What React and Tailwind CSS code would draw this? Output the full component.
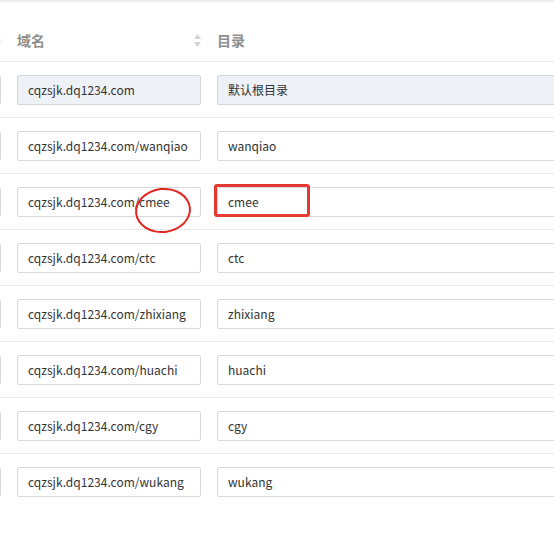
import React from 'react';

const rows = [
  { domain: 'cqzsjk.dq1234.com', dir: '默认根目录', disabled: true },
  { domain: 'cqzsjk.dq1234.com/wanqiao', dir: 'wanqiao' },
  { domain: 'cqzsjk.dq1234.com/cmee', dir: 'cmee', marked: true },
  { domain: 'cqzsjk.dq1234.com/ctc', dir: 'ctc' },
  { domain: 'cqzsjk.dq1234.com/zhixiang', dir: 'zhixiang' },
  { domain: 'cqzsjk.dq1234.com/huachi', dir: 'huachi' },
  { domain: 'cqzsjk.dq1234.com/cgy', dir: 'cgy' },
  { domain: 'cqzsjk.dq1234.com/wukang', dir: 'wukang' }
];

const SortIcon = () => (
  <svg width="7" height="13" viewBox="0 0 7 13" className="shrink-0">
    <path d="M3.5 0 L7 5 L0 5 Z" fill="#d4d4d4" />
    <path d="M3.5 13 L7 8 L0 8 Z" fill="#d4d4d4" />
  </svg>
);

const Field = ({ value, disabled }) => (
  <div
    className={`h-[30px] flex items-center px-[10px] border rounded-[2px] text-[12px] text-[#333] whitespace-nowrap overflow-hidden ${
      disabled ? 'bg-[#eef1f6] border-[#d3d6dc]' : 'bg-white border-[#d9d9d9]'
    }`}>
    {value}
  </div>
);

const App = () => {
  return (
    <div
      className="w-[554px] h-[534px] overflow-hidden bg-white"
      style={{ fontFamily: '"Noto Sans CJK SC", "Noto Sans", sans-serif' }}>
      <div className="h-[2px] bg-[#eeeeee]" />
      <div className="-ml-[191px] w-[1000px]">
        <div className="grid grid-cols-[200px_200px_600px] h-[60px] items-start pt-[29px] border-b border-dotted border-[#d6d6d6]">
          <div className="flex justify-end px-2 pt-[2px]">
            <SortIcon />
          </div>
          <div className="flex items-center justify-between px-2">
            <span className="text-[14px] leading-[18px] font-bold text-[#8f8f8f]">域名</span>
            <SortIcon />
          </div>
          <div className="flex items-center px-2">
            <span className="text-[14px] leading-[18px] font-bold text-[#8f8f8f]">目录</span>
          </div>
        </div>
        {rows.map((row, index) => (
          <div
            key={index}
            className={`grid grid-cols-[200px_200px_600px] h-[56px] items-start pt-[13px] ${
              index < rows.length - 1 ? 'border-b border-dotted border-[#d6d6d6]' : ''
            }`}>
            <div className="px-2">
              <Field value="" />
            </div>
            <div className="px-2 relative">
              <Field value={row.domain} disabled={row.disabled} />
              {row.marked && (
                <div className="absolute left-[126px] top-[1px] w-[56px] h-[45px] rounded-[50%] border-2 border-[#e0261f] -rotate-6" />
              )}
            </div>
            <div className="px-2 relative">
              <Field value={row.dir} disabled={row.disabled} />
              {row.marked && (
                <div className="absolute left-[5px] top-[-3px] w-[96px] h-[33px] rounded-[3px] border-[3px] border-[#e53a31]" />
              )}
            </div>
          </div>
        ))}
      </div>
    </div>
  );
};

export default App;
